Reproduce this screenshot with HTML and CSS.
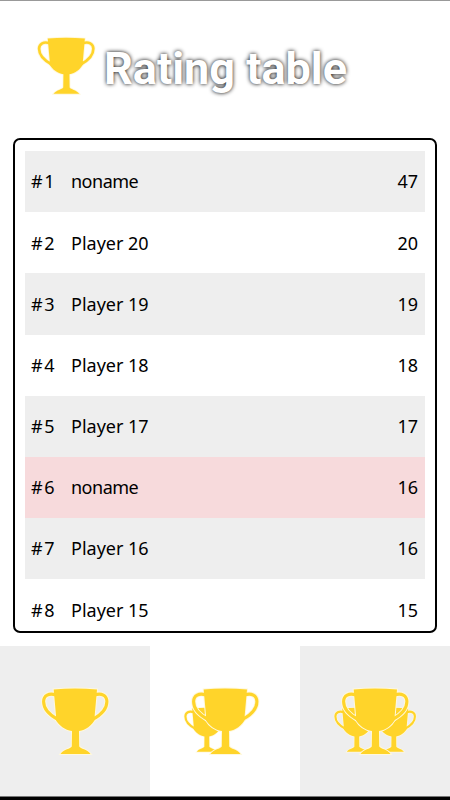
FILE: index.html
```
<!DOCTYPE html>
<html lang="en">
<head>
    <meta charset="UTF-8">
    <meta name="viewport" content="width=device-width, initial-scale=1.0">
    <title>Rating table</title>
    <link rel="stylesheet" href="styles.css">
</head>
<body>
    <svg class="defs" width="0" height="0">
        <symbol id="cup" viewBox="-2 -2 70 70">
            <g class="cup-outline">
                <path class="handle" d="M14 6.500C7 4 1.600 7 1.600 13C1.600 20 6.500 26 16 31M52.500 6.500C59.500 4 64.900 7 64.900 13C64.900 20 60 26 50.500 31"/>
                <path class="body" d="M11.700 1Q33 -1 55 1L52.700 27L53 31C49.500 37 44 41.500 37 42.500L37.200 58C38.500 60.500 45 60.500 48.500 65.500H18.500C22 60.500 28.500 60.500 29.800 58L30 42.500C23 41.500 17 37 13.500 31L14 27Z"/>
            </g>
            <path class="handle" d="M14 6.500C7 4 1.600 7 1.600 13C1.600 20 6.500 26 16 31M52.500 6.500C59.500 4 64.900 7 64.900 13C64.900 20 60 26 50.500 31"/>
            <path class="body" d="M11.700 1Q33 -1 55 1L52.700 27L53 31C49.500 37 44 41.500 37 42.500L37.200 58C38.500 60.500 45 60.500 48.500 65.500H18.500C22 60.500 28.500 60.500 29.800 58L30 42.500C23 41.500 17 37 13.500 31L14 27Z"/>
        </symbol>
    </svg>

    <header class="header">
        <svg class="header-cup"><use href="#cup"/></svg>
        <h1>Rating table</h1>
    </header>

    <main class="table-box">
        <div class="row"><span class="place">#1</span><span class="name noname">noname</span><span class="score">47</span></div>
        <div class="row"><span class="place">#2</span><span class="name">Player 20</span><span class="score">20</span></div>
        <div class="row"><span class="place">#3</span><span class="name">Player 19</span><span class="score">19</span></div>
        <div class="row"><span class="place">#4</span><span class="name">Player 18</span><span class="score">18</span></div>
        <div class="row"><span class="place">#5</span><span class="name">Player 17</span><span class="score">17</span></div>
        <div class="row current"><span class="place">#6</span><span class="name noname">noname</span><span class="score">16</span></div>
        <div class="row"><span class="place">#7</span><span class="name">Player 16</span><span class="score">16</span></div>
        <div class="row"><span class="place">#8</span><span class="name">Player 15</span><span class="score">15</span></div>
    </main>

    <nav class="tabs">
        <div class="tab">
            <svg viewBox="0 0 150 150"><use href="#cup" x="40" y="40.500" width="70" height="70"/></svg>
        </div>
        <div class="tab active">
            <svg viewBox="0 0 150 150">
                <use href="#cup" x="33" y="60.500" width="47" height="47"/>
                <use href="#cup" x="40" y="40.500" width="70" height="70"/>
            </svg>
        </div>
        <div class="tab">
            <svg viewBox="0 0 150 150">
                <use href="#cup" x="33" y="60.500" width="47" height="47"/>
                <use href="#cup" x="70" y="60.500" width="47" height="47"/>
                <use href="#cup" x="40" y="40.500" width="70" height="70"/>
            </svg>
        </div>
    </nav>
</body>
</html>
```
FILE: styles.css
```
* {
    box-sizing: border-box;
}

body {
    margin: 0;
    height: 800px;
    overflow: hidden;
    display: flex;
    flex-direction: column;
    background-color: #fff;
    border-top: 1px solid #999;
    border-bottom: 3px solid #000;
    font-family: 'Noto Sans', sans-serif;
    font-size: 18px;
    color: #000;
}

.defs {
    position: absolute;
}

.header {
    flex: none;
    display: flex;
    height: 137px;
    padding: 35px 0 0 36px;
}

.header-cup {
    width: 60px;
    height: 60px;
}

h1 {
    margin: 5px 0 0 8px;
    font-family: Roboto, sans-serif;
    font-size: 45px;
    line-height: 56px;
    font-weight: 700;
    color: #fff;
    white-space: nowrap;
    text-shadow: 0 0 4px #000;
}

.table-box {
    flex: none;
    height: 495px;
    margin: 0 13px;
    padding: 11px 10px 0;
    border: 2px solid #000;
    border-radius: 7px;
    overflow: hidden;
}

.row {
    display: flex;
    align-items: center;
    height: 61.2px;
    padding: 0 7px 0.5px 6px;
}

.row:nth-child(odd) {
    background-color: #eee;
}

.row.current {
    background-color: #f7dadc;
}

.place {
    width: 40px;
    letter-spacing: 1.5px;
}

.name {
    flex: 1;
}

.noname {
    letter-spacing: -0.5px;
}

.tabs {
    flex: none;
    display: flex;
    height: 151px;
    margin-top: 13px;
    border-bottom: 1px solid #777;
}

.tab {
    flex: 1;
    height: 150px;
    background-color: #eee;
}

.tab.active {
    background-color: #fff;
}

.tab svg {
    display: block;
    width: 150px;
    height: 150px;
}

.body {
    fill: #ffd42a;
}

.handle {
    fill: none;
    stroke: #ffd42a;
    stroke-width: 3.1;
}

.cup-outline .body {
    fill: #fff8dc;
    stroke: #fff8dc;
    stroke-width: 2;
}

.cup-outline .handle {
    stroke: #fff8dc;
    stroke-width: 5;
}
```
